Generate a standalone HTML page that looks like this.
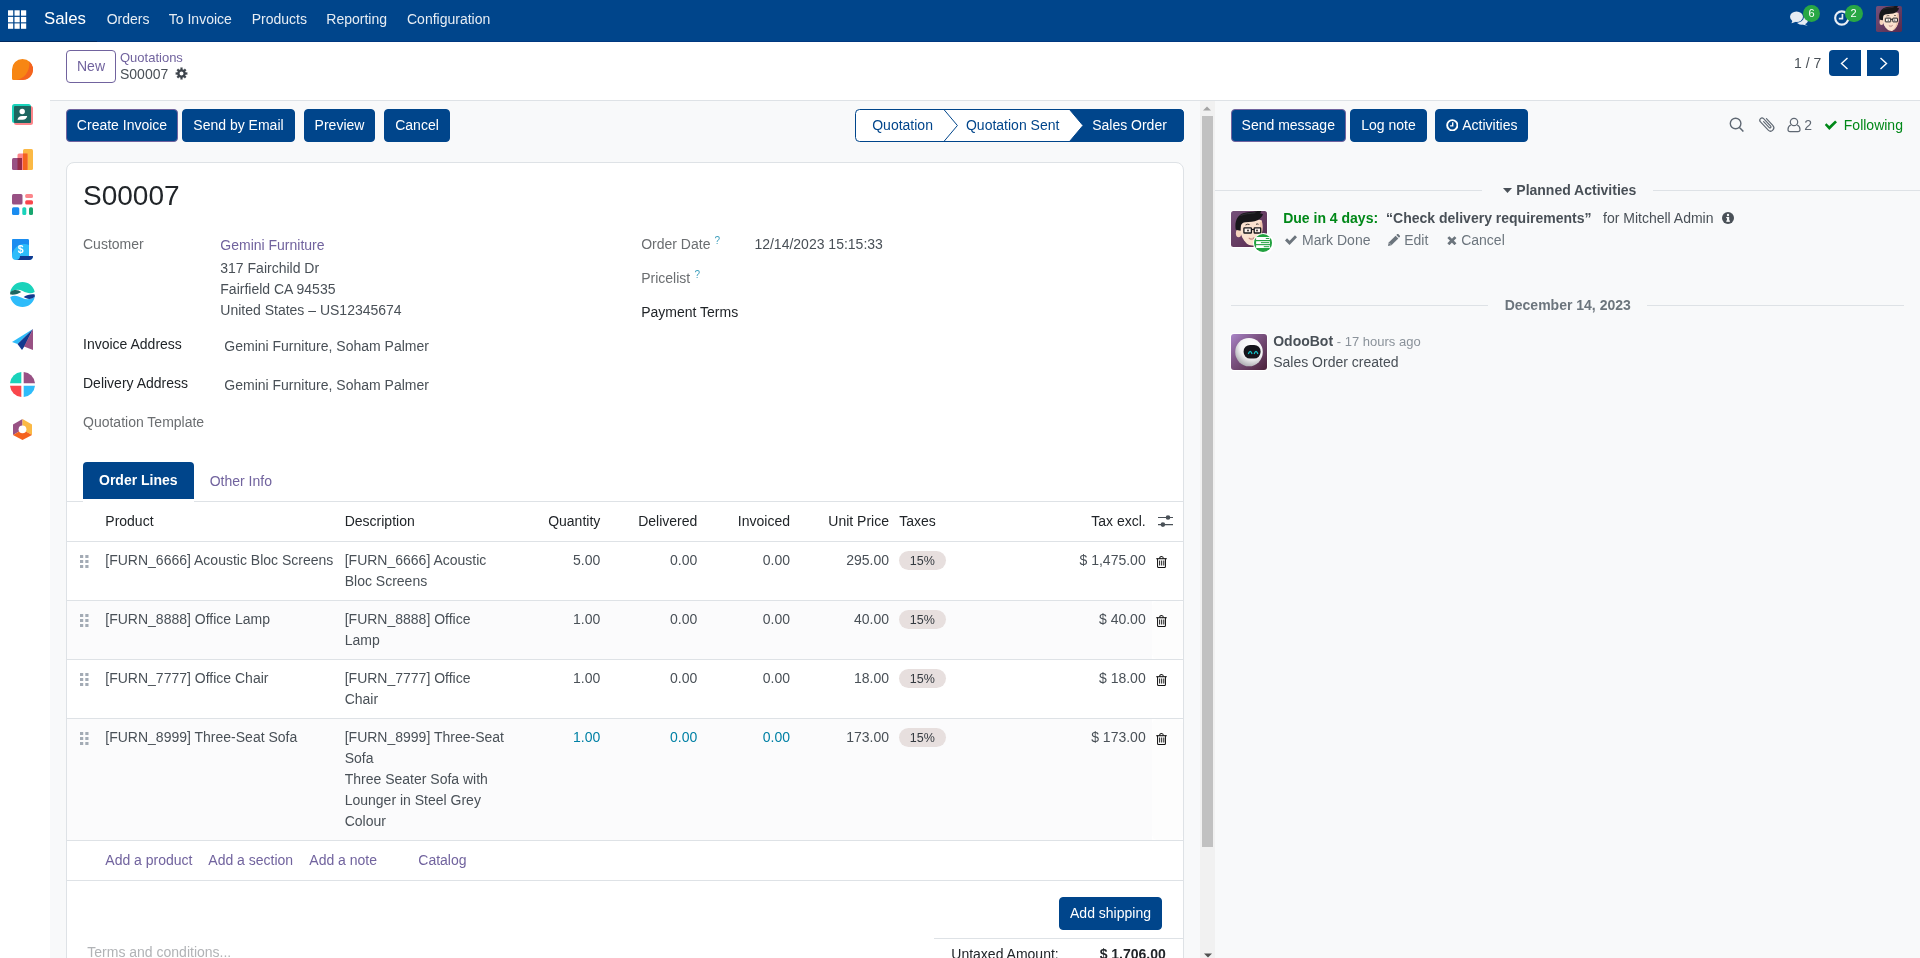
<!DOCTYPE html>
<html lang="en">
<head>
<meta charset="utf-8">
<title>Odoo - S00007</title>
<style>
*{box-sizing:border-box;margin:0;padding:0}
html,body{width:1920px;height:958px;overflow:hidden;background:#f8f9fa}
body{font-family:"Liberation Sans",Arial,sans-serif;font-size:14px;color:#495057;position:relative;line-height:21px}
a{color:#71639e;text-decoration:none}
.abs{position:absolute}
.nw{white-space:nowrap}
svg{display:block}
/* NAVBAR */
#nav{position:absolute;left:0;top:0;width:1920px;height:42px;background:#00458b;color:#fff;border-bottom:1px solid #003880}
#nav .brand{position:absolute;left:44px;top:8px;font-size:16.800px;line-height:22px;color:#fff}
#nav .mi{position:absolute;top:9px;font-size:14px;line-height:21px;color:rgba(255,255,255,.9);white-space:nowrap}
.badge{position:absolute;height:17px;min-width:17px;border-radius:9px;background:#28a745;color:#fff;font-size:11px;line-height:17px;text-align:center}
/* SIDEBAR */
#side{position:absolute;left:0;top:42px;width:50px;height:916px;background:#fff}
/* CONTROL PANEL */
#cp{position:absolute;left:50px;top:42px;width:1870px;height:59px;background:#fff;border-bottom:1px solid #dee2e6}
.btn{position:absolute;height:33px;border-radius:4px;background:#00458b;color:#fff;border:1px solid #00458b;font-size:14px;line-height:31px;text-align:center;white-space:nowrap}
.btn.pri{border-color:#71639e}
/* FORM */
#form{position:absolute;left:50px;top:101px;width:1150px;height:857px;background:#f8f9fa;overflow:hidden}
#sb{position:absolute;left:1200px;top:101px;width:15px;height:857px;background:#f1f1f1}
#sheet{position:absolute;left:16px;top:61px;width:1118px;height:900px;background:#fff;border:1px solid #dee2e6;border-radius:8px 8px 0 0}
/* CHATTER */
#chat{position:absolute;left:1215px;top:101px;width:705px;height:857px;background:#f8f9fa}

#root{position:absolute;left:0;top:0;width:1920px;height:958px;overflow:hidden;will-change:transform}
</style>
</head>
<body>
<div id="root">
<svg width="0" height="0" style="position:absolute"><defs>
<linearGradient id="avg" x1="0" y1="0" x2="1" y2="1"><stop offset="0" stop-color="#75517a"/><stop offset="1" stop-color="#582a4c"/></linearGradient>
<symbol id="avatar" viewBox="0 0 36 36">
<rect width="36" height="36" rx="2.500" fill="url(#avg)"/>
<ellipse cx="7.600" cy="22.300" rx="2.700" ry="4" fill="#f6d3bd"/>
<path d="M9.300 10c6-2.500 15-3 21.500-.500.800 4 .900 9 0 13.500-.900 4.200-3.800 9.500-7.800 11.300-2.500.800-5.500-.200-7.500-2-3.500-3.200-5.800-8-6.200-13z" fill="#fbe2cf"/>
<path d="M28.500 12c1 4 .800 9-.500 13-1.200 3.800-3.500 7.500-6.500 9.300 4.500-.500 8.200-6.500 9.300-11.300.900-4.500.800-9.500 0-13.500z" fill="#f0c4ac"/>
<path d="M4.700 18.500C3.500 11 6 4.500 12 2.300c4-1.500 9-1.300 13-2 2-.400 4-.800 5.500-.600-.300 1.200-.800 2-1.500 2.800 1.200 0 2.300.300 3 1-1.200 2.500-2.800 4.500-5.500 5.800-3.500 1.700-8 1.500-12 2-2.500.300-4 1.200-4.500 3.200-.400 1.700-.300 3.500-.400 5.300-1.700-.200-3.500-.500-4.900-1.300z" fill="#17171a"/>
<path d="M9.500 4.500c4-2 10-2 15-2.800" stroke="#3a3a3f" stroke-width=".800" fill="none"/>
<rect x="12.900" y="16.800" width="7.500" height="5.200" rx=".600" fill="#fff" fill-opacity=".6" stroke="#17171a" stroke-width="1.300"/>
<rect x="23.200" y="16.800" width="6.500" height="5.200" rx=".600" fill="#fff" fill-opacity=".6" stroke="#17171a" stroke-width="1.300"/>
<path d="M20.400 18.500h2.800" stroke="#17171a" stroke-width="1.200"/>
<path d="M14.500 14q2-1.300 4-.500M25 13.300q1.300-.700 2.500 0" stroke="#2a2220" stroke-width=".900" fill="none"/>
<circle cx="17" cy="19.500" r=".900" fill="#2a2220"/><circle cx="26" cy="19.500" r=".900" fill="#2a2220"/>
<path d="M17.800 27c1.800.900 3.500.800 5.200-.400-.800 2.300-3.800 2.800-5.200.400z" fill="#fff" stroke="#9c4a42" stroke-width=".500"/>
</symbol>
<linearGradient id="botg" x1="0" y1="0" x2="1" y2="1"><stop offset="0" stop-color="#aa86c8"/><stop offset=".4" stop-color="#7e5585"/><stop offset="1" stop-color="#4a2139"/></linearGradient>
<radialGradient id="botb" cx=".62" cy=".3" r=".8"><stop offset="0" stop-color="#ffffff"/><stop offset=".55" stop-color="#f2f2f4"/><stop offset="1" stop-color="#9d9da3"/></radialGradient>
<symbol id="bot" viewBox="0 0 36 36">
<rect width="36" height="36" rx="3" fill="url(#botg)"/>
<ellipse cx="18" cy="18.100" rx="13.800" ry="14.200" fill="url(#botb)"/>
<rect x="12.600" y="10.900" width="17" height="13.700" rx="6.500" fill="#15151b"/>
<path d="M17.500 19.500q1.700-4.400 3.400 0" fill="none" stroke="#12c4c9" stroke-width="1.300" stroke-linecap="round"/>
<path d="M23.300 19.500q1.700-4.400 3.400 0" fill="none" stroke="#12c4c9" stroke-width="1.300" stroke-linecap="round"/>
</symbol>
</defs></svg>
<div id="nav">
<div id="navdark" class="abs" style="left:0;top:41px;width:97px;height:1px;background:#00295f"></div>
<svg class="abs" style="left:8px;top:10px" width="19" height="19" viewBox="0 0 19 19"><g fill="#fff"><rect x="0" y="0.3" width="5.2" height="5.4"/><rect x="6.5" y="0.3" width="5.2" height="5.4"/><rect x="13" y="0.3" width="5.2" height="5.4"/><rect x="0" y="6.9" width="5.2" height="5.4"/><rect x="6.5" y="6.9" width="5.2" height="5.4"/><rect x="13" y="6.9" width="5.2" height="5.4"/><rect x="0" y="13.4" width="5.2" height="5.4"/><rect x="6.5" y="13.4" width="5.2" height="5.4"/><rect x="13" y="13.4" width="5.2" height="5.4"/></g></svg>
<div class="brand">Sales</div>
<div class="mi" style="left:106.700px">Orders</div>
<div class="mi" style="left:168.800px">To Invoice</div>
<div class="mi" style="left:251.700px">Products</div>
<div class="mi" style="left:326.300px">Reporting</div>
<div class="mi" style="left:407px">Configuration</div>
<!-- messages icon -->
<svg class="abs" style="left:1790px;top:10.500px" width="18" height="15" viewBox="0 0 18 15"><g fill="#e6ecf4"><ellipse cx="12" cy="9.300" rx="6" ry="4.400"/><path d="M14.200 12.800l3.500 2-4.800-1z"/></g><ellipse cx="6.500" cy="5.700" rx="7.500" ry="6.200" fill="#00458b"/><g fill="#e6ecf4"><ellipse cx="6.500" cy="5.700" rx="6.500" ry="5.200"/><path d="M2.600 9.200L1.500 12.300l4.500-1.600z"/></g></svg>
<div class="badge" style="left:1803px;top:5px">6</div>
<!-- clock icon -->
<svg class="abs" style="left:1834px;top:9.500px" width="15.500" height="16" viewBox="0 0 16 16"><circle cx="8" cy="8" r="6.800" fill="none" stroke="#e9eef5" stroke-width="2.200"/><path d="M8.700 3.800v4.900H5" fill="none" stroke="#e9eef5" stroke-width="1.700"/></svg>
<div class="badge" style="left:1844.500px;top:5px;width:18px">2</div>
<!-- avatar -->
<svg class="abs" style="left:1876px;top:6px" width="26" height="26" viewBox="0 0 36 36"><use href="#avatar"/></svg>
</div>
<div id="side"><div class="abs" style="left:0;top:-1px">
<!-- discuss -->
<svg class="abs" style="left:12px;top:17.500px" width="21" height="21" viewBox="0 0 21 21"><path d="M10.500 0A10.500 10.500 0 0 1 10.500 21H1.500A1.500 1.500 0 0 1 0 19.500V10.500A10.500 10.500 0 0 1 10.500 0z" fill="#f78613"/><path d="M17.200 2.400A10.500 10.500 0 0 1 10.500 21H4.500C13 19.500 18.500 11 17.200 2.400z" fill="#f4631f"/></svg>
<!-- contacts -->
<svg class="abs" style="left:12px;top:63px" width="21" height="21" viewBox="0 0 21 21"><rect x="2" y="2" width="19" height="19" rx="2.500" fill="#fc868b"/><rect x="0" y="0" width="19" height="19" rx="2.500" fill="#1ad3bb"/><rect x="2" y="2" width="17" height="17" rx="1" fill="#1d6660"/><circle cx="10.200" cy="7.500" r="2.700" fill="#fff"/><path d="M5.500 15.800c.300-2.500 2-3.800 4.700-3.800h5c-.400 2.400-2 3.800-4.700 3.800z" fill="#fff"/></svg>
<!-- sales -->
<svg class="abs" style="left:12px;top:108px" width="21" height="21" viewBox="0 0 21 21"><rect x="11" y="0" width="10" height="21" rx="1.500" fill="#fbb945"/><rect x="5.500" y="4.500" width="10" height="16.500" rx="1.500" fill="#fc868b"/><rect x="11" y="4.500" width="4.500" height="16.500" fill="#f4631f"/><rect x="0" y="9" width="10" height="12" rx="1.500" fill="#985184"/><rect x="5.500" y="9" width="4.500" height="12" fill="#962b48"/></svg>
<!-- dashboards -->
<svg class="abs" style="left:12px;top:153px" width="21" height="21" viewBox="0 0 21 21"><rect x="0" y="0" width="10.500" height="10.500" rx="1.500" fill="#985184"/><rect x="13.200" y="0" width="7.800" height="4" rx="1.500" fill="#fc868b"/><rect x="13.200" y="6.200" width="7.800" height="4.300" rx="1.500" fill="#f9464c"/><rect x="0" y="13.300" width="7.300" height="7.700" rx="1.500" fill="#1a8cf0"/><rect x="10.300" y="13.300" width="4" height="7.700" rx="1.500" fill="#1ad3bb"/><rect x="17" y="13.300" width="4" height="7.700" rx="1.500" fill="#17a66f"/></svg>
<!-- invoicing -->
<svg class="abs" style="left:12px;top:198px" width="21" height="21" viewBox="0 0 21 21"><path d="M0 1.500A1.500 1.500 0 0 1 1.500 0H15.500A1.500 1.500 0 0 1 17 1.500V17H21c0 2.500-1.500 4-4 4H4c-2.500 0-4-1.500-4-4z" fill="#2ebcfa"/><path d="M0 1.500A1.500 1.500 0 0 1 1.500 0H15.500A1.500 1.500 0 0 1 17 1.500V6C9 3 1.500 8 0 16z" fill="#1a8cf0"/><path d="M8 17H21c0 2.500-1.500 4-4 4H4c2.500 0 4-1.500 4-4z" fill="#12398f"/><text x="8.600" y="14.200" font-family="Liberation Sans,Arial,sans-serif" font-size="10.500" font-weight="700" fill="#fff" text-anchor="middle">$</text></svg>
<!-- wave circle -->
<svg class="abs" style="left:10px;top:241px" width="25" height="25" viewBox="0 0 25 25"><path d="M.300 10C1.500 4 6.500 0 12.500 0S23.500 4 24.700 10c-4 2.500-8 1-12-1S4.500 7.500.300 10z" fill="#1ad3bb"/><path d="M.300 10c4-3 8-2 11 0-3 2-7 3-11 2.500-.200-.800-.200-1.700 0-2.500z" fill="#1d6660"/><path d="M24.700 15C23.500 21 18.500 25 12.500 25S1.500 21 .300 15c4-2.500 8-1 12 1s8.200 1.500 12.400-1z" fill="#2ebcfa"/><path d="M24.700 15c-4 3-8 2-11 0 3-2 7-3 11-2.500.200.800.200 1.700 0 2.500z" fill="#12398f"/></svg>
<!-- email marketing -->
<svg class="abs" style="left:12px;top:288px" width="21" height="21" viewBox="0 0 21 21"><path d="M21 0L0 13l5.500 2z" fill="#2ebcfa"/><path d="M21 0L5.500 15 10 21l3-4.500z" fill="#12398f"/><path d="M21 0l-9 17.500 9 3.500z" fill="#985184"/></svg>
<!-- quadrants -->
<svg class="abs" style="left:10px;top:331px" width="25" height="25" viewBox="0 0 25 25"><path d="M11.300 0v11.300H0A12.500 12.500 0 0 1 11.300 0z" fill="#1ad3bb"/><path d="M13.700 0A12.500 12.500 0 0 1 25 11.300H13.700z" fill="#985184"/><path d="M0 13.700h11.300V25A12.500 12.500 0 0 1 0 13.700z" fill="#f9464c"/><path d="M13.700 13.700H25A12.500 12.500 0 0 1 13.700 25z" fill="#2ebcfa"/></svg>
<!-- hexagon -->
<svg class="abs" style="left:13px;top:378px" width="19" height="21" viewBox="0 0 19 21"><path d="M9.500 0v10.500L0 16V5.500z" fill="#985184"/><path d="M9.500 0L19 5.500V16l-9.500-5.500z" fill="#fbb945"/><path d="M0 16l9.500-5.500L19 16l-9.500 5z" fill="#f4631f"/><circle cx="9.500" cy="10.300" r="3.900" fill="#fff"/></svg>
</div></div>
<div id="cp"><div class="abs" style="left:0;top:-1px">
<div class="abs nw" style="left:16px;top:9px;width:50px;height:33px;border:1px solid #71639e;border-radius:4px;color:#71639e;text-align:center;line-height:31px;font-size:14px;background:#fff">New</div>
<a class="abs nw" style="left:70px;top:7px;font-size:13px;line-height:19px">Quotations</a>
<div class="abs nw" style="left:70px;top:23px;font-size:14px;line-height:21px;color:#495057">S00007</div>
<svg class="abs" style="left:125.300px;top:26.200px" width="13" height="13" viewBox="0 0 13 13"><path fill-rule="evenodd" fill="#3d444c" d="M5.54 2.21 L5.33 0.62 L7.67 0.62 L7.46 2.21 L8.86 2.78 L9.83 1.51 L11.49 3.17 L10.22 4.14 L10.79 5.54 L12.38 5.33 L12.38 7.67 L10.79 7.46 L10.22 8.86 L11.49 9.83 L9.83 11.49 L8.86 10.22 L7.46 10.79 L7.67 12.38 L5.33 12.38 L5.54 10.79 L4.14 10.22 L3.17 11.49 L1.51 9.83 L2.78 8.86 L2.21 7.46 L0.62 7.67 L0.62 5.33 L2.21 5.54 L2.78 4.14 L1.51 3.17 L3.17 1.51 L4.14 2.78z M8.50 6.50A2.0 2.0 0 1 0 4.50 6.50A2.0 2.0 0 1 0 8.50 6.50z"/></svg>
<div class="abs nw" style="left:1744px;top:12px;font-size:14px;line-height:21px;color:#495057">1 / 7</div>
<div class="abs" style="left:1779px;top:9px;width:32px;height:26px;border-radius:4px 0 0 4px;background:#00458b"><svg class="abs" style="left:11px;top:7px" width="9" height="13" viewBox="0 0 9 13"><path d="M7.500 1L1.500 6.500l6 5.500" fill="none" stroke="#fff" stroke-width="1.400"/></svg></div>
<div class="abs" style="left:1817px;top:9px;width:32px;height:26px;border-radius:0 4px 4px 0;background:#00458b"><svg class="abs" style="left:12px;top:7px" width="9" height="13" viewBox="0 0 9 13"><path d="M1.500 1l6 5.500-6 5.500" fill="none" stroke="#fff" stroke-width="1.400"/></svg></div>
</div></div>
<div id="form">
<div class="abs" style="left:-50px;top:-101px;width:0;height:0">
<div class="btn pri" style="left:66px;top:109px;width:112px;height:33px;line-height:31px">Create Invoice</div>
<div class="btn" style="left:182px;top:109px;width:113px;height:33px;line-height:31px">Send by Email</div>
<div class="btn" style="left:304px;top:109px;width:71px;height:33px;line-height:31px">Preview</div>
<div class="btn" style="left:384px;top:109px;width:66px;height:33px;line-height:31px">Cancel</div>
<svg class="abs" style="left:855px;top:109px" width="329" height="33" viewBox="0 0 329 33"><path d="M4.500 .500H324.500a4 4 0 0 1 4 4V28.500a4 4 0 0 1-4 4H4.500A4 4 0 0 1 .500 28.500V4.500A4 4 0 0 1 4.500 .500z" fill="#fff" stroke="#00458b"/><path d="M214.500 .500H324.500a4 4 0 0 1 4 4V28.500a4 4 0 0 1-4 4H214.500L228 16.500z" fill="#00458b" stroke="#00458b"/><path d="M88.900 .500L102.400 16.500 88.900 32.500" fill="none" stroke="#00458b"/><text x="47.600" y="21" text-anchor="middle" font-family="Liberation Sans,Arial,sans-serif" font-size="14" fill="#00458b">Quotation</text><text x="157.700" y="21" text-anchor="middle" font-family="Liberation Sans,Arial,sans-serif" font-size="14" fill="#00458b">Quotation Sent</text><text x="274.500" y="21" text-anchor="middle" font-family="Liberation Sans,Arial,sans-serif" font-size="14" fill="#fff">Sales Order</text></svg>
<div class="abs" style="left:66px;top:162px;width:1118px;height:810px;background:#fff;border:1px solid #dee2e6;border-radius:8px 8px 0 0"></div>
<div class="abs nw" style="top:179.5px;font-size:28px;line-height:31px;color:#212529;left:83px;">S00007</div>
<div class="abs nw" style="top:236px;font-size:14px;line-height:16px;color:#6b6e71;left:83px;">Customer</div>
<a class="abs nw" style="top:237px;font-size:14px;line-height:16px;color:#71639e;left:220.3px;">Gemini Furniture</a>
<div class="abs nw" style="top:260.3px;font-size:14px;line-height:16px;color:#495057;left:220.3px;">317 Fairchild Dr</div>
<div class="abs nw" style="top:281.3px;font-size:14px;line-height:16px;color:#495057;left:220.3px;">Fairfield CA 94535</div>
<div class="abs nw" style="top:301.5px;font-size:14px;line-height:16px;color:#495057;left:220.3px;">United States – US12345674</div>
<div class="abs nw" style="top:336px;font-size:14px;line-height:16px;color:#212529;left:83px;">Invoice Address</div>
<div class="abs nw" style="top:338px;font-size:14px;line-height:16px;color:#495057;left:224.3px;">Gemini Furniture, Soham Palmer</div>
<div class="abs nw" style="top:375px;font-size:14px;line-height:16px;color:#212529;left:83px;">Delivery Address</div>
<div class="abs nw" style="top:377px;font-size:14px;line-height:16px;color:#495057;left:224.3px;">Gemini Furniture, Soham Palmer</div>
<div class="abs nw" style="top:414.3px;font-size:14px;line-height:16px;color:#6b6e71;left:83px;">Quotation Template</div>
<div class="abs nw" style="top:235.5px;font-size:14px;line-height:16px;color:#6b6e71;left:641.2px;">Order Date</div>
<div class="abs nw" style="top:235px;font-size:10px;line-height:11px;color:#3e9fbd;left:714.4px;">?</div>
<div class="abs nw" style="top:235.5px;font-size:14px;line-height:16px;color:#495057;left:754.4px;">12/14/2023 15:15:33</div>
<div class="abs nw" style="top:270.3px;font-size:14px;line-height:16px;color:#6b6e71;left:641.2px;">Pricelist</div>
<div class="abs nw" style="top:269px;font-size:10px;line-height:11px;color:#3e9fbd;left:694.4px;">?</div>
<div class="abs nw" style="top:303.5px;font-size:14px;line-height:16px;color:#212529;left:641.2px;">Payment Terms</div>
<div class="abs" style="left:83px;top:462px;width:111px;height:37px;background:#00458b;border-radius:4px 4px 0 0"></div>
<div class="abs nw" style="top:471.5px;font-size:14px;line-height:16px;color:#fff;font-weight:700;left:99px;">Order Lines</div>
<a class="abs nw" style="top:472.7px;font-size:14px;line-height:16px;color:#71639e;left:209.7px;">Other Info</a>
<div class="abs" style="left:67px;top:501px;width:16px;height:1px;background:#dee2e6;"></div>
<div class="abs" style="left:194px;top:501px;width:989px;height:1px;background:#dee2e6;"></div>
<div class="abs nw" style="top:513px;font-size:14px;line-height:16px;color:#212529;left:105.3px;">Product</div>
<div class="abs nw" style="top:513px;font-size:14px;line-height:16px;color:#212529;left:344.7px;">Description</div>
<div class="abs" style="left:600.3px;top:513px;width:0;height:0"><div class="abs nw" style="top:0;font-size:14px;line-height:16px;color:#212529;right:0;">Quantity</div></div>
<div class="abs" style="left:697.3px;top:513px;width:0;height:0"><div class="abs nw" style="top:0;font-size:14px;line-height:16px;color:#212529;right:0;">Delivered</div></div>
<div class="abs" style="left:790px;top:513px;width:0;height:0"><div class="abs nw" style="top:0;font-size:14px;line-height:16px;color:#212529;right:0;">Invoiced</div></div>
<div class="abs" style="left:889px;top:513px;width:0;height:0"><div class="abs nw" style="top:0;font-size:14px;line-height:16px;color:#212529;right:0;">Unit Price</div></div>
<div class="abs nw" style="top:513px;font-size:14px;line-height:16px;color:#212529;left:899.3px;">Taxes</div>
<div class="abs" style="left:1145.7px;top:513px;width:0;height:0"><div class="abs nw" style="top:0;font-size:14px;line-height:16px;color:#212529;right:0;">Tax excl.</div></div>
<svg class="abs" style="left:1158px;top:514px" width="15" height="14" viewBox="0 0 15 14"><g stroke="#495057" stroke-width="1.100" fill="none"><path d="M0 3.500h15M0 10.600h15"/></g><circle cx="10" cy="3.500" r="2.300" fill="#495057"/><circle cx="4.900" cy="10.600" r="2.300" fill="#495057"/></svg>
<div class="abs" style="left:67px;top:541px;width:1116px;height:1px;background:#dee2e6;"></div>
<svg class="abs" style="left:79.7px;top:555px" width="9" height="13" viewBox="0 0 9 13"><g fill="#a3abb5"><rect x="0" y="0" width="3.200" height="3"/><rect x="5.300" y="0" width="3.200" height="3"/><rect x="0" y="5" width="3.200" height="3"/><rect x="5.300" y="5" width="3.200" height="3"/><rect x="0" y="10" width="3.200" height="3"/><rect x="5.300" y="10" width="3.200" height="3"/></g></svg>
<div class="abs nw" style="top:552px;font-size:14px;line-height:16px;color:#495057;left:105.3px;">[FURN_6666] Acoustic Bloc Screens</div>
<div class="abs nw" style="top:552px;font-size:14px;line-height:16px;color:#495057;left:344.7px;">[FURN_6666] Acoustic</div>
<div class="abs nw" style="top:573px;font-size:14px;line-height:16px;color:#495057;left:344.7px;">Bloc Screens</div>
<div class="abs" style="left:600.3px;top:552px;width:0;height:0"><div class="abs nw" style="top:0;font-size:14px;line-height:16px;color:#495057;right:0;">5.00</div></div>
<div class="abs" style="left:697.3px;top:552px;width:0;height:0"><div class="abs nw" style="top:0;font-size:14px;line-height:16px;color:#495057;right:0;">0.00</div></div>
<div class="abs" style="left:790px;top:552px;width:0;height:0"><div class="abs nw" style="top:0;font-size:14px;line-height:16px;color:#495057;right:0;">0.00</div></div>
<div class="abs" style="left:889px;top:552px;width:0;height:0"><div class="abs nw" style="top:0;font-size:14px;line-height:16px;color:#495057;right:0;">295.00</div></div>
<div class="abs" style="left:899px;top:551px;width:47px;height:19px;background:#e7dfde;border-radius:9.500px"></div>
<div class="abs nw" style="top:554px;font-size:12.5px;line-height:14px;color:#343a40;left:909.8px;">15%</div>
<div class="abs" style="left:1145.7px;top:552px;width:0;height:0"><div class="abs nw" style="top:0;font-size:14px;line-height:16px;color:#495057;right:0;">$ 1,475.00</div></div>
<svg class="abs" style="left:1155.700px;top:556px" width="11" height="12" viewBox="0 0 12 12" preserveAspectRatio="none"><g fill="none" stroke="#111" stroke-width="1.100"><path d="M.300 2.700h11.400"/><path d="M4 2.500c0-2.600 4-2.600 4 0"/><path d="M1.700 2.700v7.800a1 1 0 0 0 1 1h6.600a1 1 0 0 0 1-1V2.700"/><path d="M3.950 4.500v5M6.200 4.500v5M8.500 4.500v5" stroke-width="1"/></g></svg>
<div class="abs" style="left:67px;top:600px;width:1116px;height:1px;background:#dee2e6;"></div>
<div class="abs" style="left:67px;top:601px;width:1085px;height:58px;background:#fbfbfc;"></div>
<div class="abs" style="left:1152px;top:601px;width:31px;height:58px;background:#fdfdfd;border-radius:6px"></div>
<svg class="abs" style="left:79.7px;top:614px" width="9" height="13" viewBox="0 0 9 13"><g fill="#a3abb5"><rect x="0" y="0" width="3.200" height="3"/><rect x="5.300" y="0" width="3.200" height="3"/><rect x="0" y="5" width="3.200" height="3"/><rect x="5.300" y="5" width="3.200" height="3"/><rect x="0" y="10" width="3.200" height="3"/><rect x="5.300" y="10" width="3.200" height="3"/></g></svg>
<div class="abs nw" style="top:611px;font-size:14px;line-height:16px;color:#495057;left:105.3px;">[FURN_8888] Office Lamp</div>
<div class="abs nw" style="top:611px;font-size:14px;line-height:16px;color:#495057;left:344.7px;">[FURN_8888] Office</div>
<div class="abs nw" style="top:632px;font-size:14px;line-height:16px;color:#495057;left:344.7px;">Lamp</div>
<div class="abs" style="left:600.3px;top:611px;width:0;height:0"><div class="abs nw" style="top:0;font-size:14px;line-height:16px;color:#495057;right:0;">1.00</div></div>
<div class="abs" style="left:697.3px;top:611px;width:0;height:0"><div class="abs nw" style="top:0;font-size:14px;line-height:16px;color:#495057;right:0;">0.00</div></div>
<div class="abs" style="left:790px;top:611px;width:0;height:0"><div class="abs nw" style="top:0;font-size:14px;line-height:16px;color:#495057;right:0;">0.00</div></div>
<div class="abs" style="left:889px;top:611px;width:0;height:0"><div class="abs nw" style="top:0;font-size:14px;line-height:16px;color:#495057;right:0;">40.00</div></div>
<div class="abs" style="left:899px;top:610px;width:47px;height:19px;background:#e7dfde;border-radius:9.500px"></div>
<div class="abs nw" style="top:613px;font-size:12.5px;line-height:14px;color:#343a40;left:909.8px;">15%</div>
<div class="abs" style="left:1145.7px;top:611px;width:0;height:0"><div class="abs nw" style="top:0;font-size:14px;line-height:16px;color:#495057;right:0;">$ 40.00</div></div>
<svg class="abs" style="left:1155.700px;top:615px" width="11" height="12" viewBox="0 0 12 12" preserveAspectRatio="none"><g fill="none" stroke="#111" stroke-width="1.100"><path d="M.300 2.700h11.400"/><path d="M4 2.500c0-2.600 4-2.600 4 0"/><path d="M1.700 2.700v7.800a1 1 0 0 0 1 1h6.600a1 1 0 0 0 1-1V2.700"/><path d="M3.950 4.500v5M6.200 4.500v5M8.500 4.500v5" stroke-width="1"/></g></svg>
<div class="abs" style="left:67px;top:659px;width:1116px;height:1px;background:#dee2e6;"></div>
<svg class="abs" style="left:79.7px;top:673px" width="9" height="13" viewBox="0 0 9 13"><g fill="#a3abb5"><rect x="0" y="0" width="3.200" height="3"/><rect x="5.300" y="0" width="3.200" height="3"/><rect x="0" y="5" width="3.200" height="3"/><rect x="5.300" y="5" width="3.200" height="3"/><rect x="0" y="10" width="3.200" height="3"/><rect x="5.300" y="10" width="3.200" height="3"/></g></svg>
<div class="abs nw" style="top:670px;font-size:14px;line-height:16px;color:#495057;left:105.3px;">[FURN_7777] Office Chair</div>
<div class="abs nw" style="top:670px;font-size:14px;line-height:16px;color:#495057;left:344.7px;">[FURN_7777] Office</div>
<div class="abs nw" style="top:691px;font-size:14px;line-height:16px;color:#495057;left:344.7px;">Chair</div>
<div class="abs" style="left:600.3px;top:670px;width:0;height:0"><div class="abs nw" style="top:0;font-size:14px;line-height:16px;color:#495057;right:0;">1.00</div></div>
<div class="abs" style="left:697.3px;top:670px;width:0;height:0"><div class="abs nw" style="top:0;font-size:14px;line-height:16px;color:#495057;right:0;">0.00</div></div>
<div class="abs" style="left:790px;top:670px;width:0;height:0"><div class="abs nw" style="top:0;font-size:14px;line-height:16px;color:#495057;right:0;">0.00</div></div>
<div class="abs" style="left:889px;top:670px;width:0;height:0"><div class="abs nw" style="top:0;font-size:14px;line-height:16px;color:#495057;right:0;">18.00</div></div>
<div class="abs" style="left:899px;top:669px;width:47px;height:19px;background:#e7dfde;border-radius:9.500px"></div>
<div class="abs nw" style="top:672px;font-size:12.5px;line-height:14px;color:#343a40;left:909.8px;">15%</div>
<div class="abs" style="left:1145.7px;top:670px;width:0;height:0"><div class="abs nw" style="top:0;font-size:14px;line-height:16px;color:#495057;right:0;">$ 18.00</div></div>
<svg class="abs" style="left:1155.700px;top:674px" width="11" height="12" viewBox="0 0 12 12" preserveAspectRatio="none"><g fill="none" stroke="#111" stroke-width="1.100"><path d="M.300 2.700h11.400"/><path d="M4 2.500c0-2.600 4-2.600 4 0"/><path d="M1.700 2.700v7.800a1 1 0 0 0 1 1h6.600a1 1 0 0 0 1-1V2.700"/><path d="M3.950 4.500v5M6.200 4.500v5M8.500 4.500v5" stroke-width="1"/></g></svg>
<div class="abs" style="left:67px;top:718px;width:1116px;height:1px;background:#dee2e6;"></div>
<div class="abs" style="left:67px;top:719px;width:1085px;height:121px;background:#fbfbfc;"></div>
<div class="abs" style="left:1152px;top:719px;width:31px;height:121px;background:#fdfdfd;border-radius:6px"></div>
<svg class="abs" style="left:79.7px;top:732px" width="9" height="13" viewBox="0 0 9 13"><g fill="#a3abb5"><rect x="0" y="0" width="3.200" height="3"/><rect x="5.300" y="0" width="3.200" height="3"/><rect x="0" y="5" width="3.200" height="3"/><rect x="5.300" y="5" width="3.200" height="3"/><rect x="0" y="10" width="3.200" height="3"/><rect x="5.300" y="10" width="3.200" height="3"/></g></svg>
<div class="abs nw" style="top:729px;font-size:14px;line-height:16px;color:#495057;left:105.3px;">[FURN_8999] Three-Seat Sofa</div>
<div class="abs nw" style="top:729px;font-size:14px;line-height:16px;color:#495057;left:344.7px;">[FURN_8999] Three-Seat</div>
<div class="abs nw" style="top:750px;font-size:14px;line-height:16px;color:#495057;left:344.7px;">Sofa</div>
<div class="abs nw" style="top:771px;font-size:14px;line-height:16px;color:#495057;left:344.7px;">Three Seater Sofa with</div>
<div class="abs nw" style="top:792px;font-size:14px;line-height:16px;color:#495057;left:344.7px;">Lounger in Steel Grey</div>
<div class="abs nw" style="top:813px;font-size:14px;line-height:16px;color:#495057;left:344.7px;">Colour</div>
<div class="abs" style="left:600.3px;top:729px;width:0;height:0"><div class="abs nw" style="top:0;font-size:14px;line-height:16px;color:#0180a5;right:0;">1.00</div></div>
<div class="abs" style="left:697.3px;top:729px;width:0;height:0"><div class="abs nw" style="top:0;font-size:14px;line-height:16px;color:#0180a5;right:0;">0.00</div></div>
<div class="abs" style="left:790px;top:729px;width:0;height:0"><div class="abs nw" style="top:0;font-size:14px;line-height:16px;color:#0180a5;right:0;">0.00</div></div>
<div class="abs" style="left:889px;top:729px;width:0;height:0"><div class="abs nw" style="top:0;font-size:14px;line-height:16px;color:#495057;right:0;">173.00</div></div>
<div class="abs" style="left:899px;top:728px;width:47px;height:19px;background:#e7dfde;border-radius:9.500px"></div>
<div class="abs nw" style="top:731px;font-size:12.5px;line-height:14px;color:#343a40;left:909.8px;">15%</div>
<div class="abs" style="left:1145.7px;top:729px;width:0;height:0"><div class="abs nw" style="top:0;font-size:14px;line-height:16px;color:#495057;right:0;">$ 173.00</div></div>
<svg class="abs" style="left:1155.700px;top:733px" width="11" height="12" viewBox="0 0 12 12" preserveAspectRatio="none"><g fill="none" stroke="#111" stroke-width="1.100"><path d="M.300 2.700h11.400"/><path d="M4 2.500c0-2.600 4-2.600 4 0"/><path d="M1.700 2.700v7.800a1 1 0 0 0 1 1h6.600a1 1 0 0 0 1-1V2.700"/><path d="M3.950 4.500v5M6.200 4.500v5M8.500 4.500v5" stroke-width="1"/></g></svg>
<div class="abs" style="left:67px;top:840px;width:1116px;height:1px;background:#dee2e6;"></div>
<a class="abs nw" style="top:852px;font-size:14px;line-height:16px;color:#71639e;left:105.3px;">Add a product</a>
<a class="abs nw" style="top:852px;font-size:14px;line-height:16px;color:#71639e;left:208.3px;">Add a section</a>
<a class="abs nw" style="top:852px;font-size:14px;line-height:16px;color:#71639e;left:309.3px;">Add a note</a>
<a class="abs nw" style="top:852px;font-size:14px;line-height:16px;color:#71639e;left:418.3px;">Catalog</a>
<div class="abs" style="left:67px;top:880px;width:1116px;height:1px;background:#dee2e6;"></div>
<div class="btn" style="left:1059px;top:897px;width:103px;height:33px;line-height:31px">Add shipping</div>
<div class="abs" style="left:934px;top:938px;width:249px;height:1px;background:#dee2e6;"></div>
<div class="abs nw" style="top:946.2px;font-size:14px;line-height:16px;color:#212529;left:951.3px;">Untaxed Amount:</div>
<div class="abs" style="left:1165.8px;top:946.2px;width:0;height:0"><div class="abs nw" style="top:0;font-size:14px;line-height:16px;color:#212529;font-weight:700;right:0;">$ 1,706.00</div></div>
<div class="abs nw" style="top:944px;font-size:14px;line-height:16px;color:#b1b3b6;left:87.3px;">Terms and conditions...</div>
</div></div>
<div id="sb">
<div class="abs" style="left:2px;top:15px;width:11px;height:731px;background:#c1c1c1;"></div>
<svg class="abs" style="left:3px;top:5px" width="8" height="5" viewBox="0 0 8 5"><path d="M0 4.500L4 .500l4 4z" fill="#a3a3a3"/></svg>
<svg class="abs" style="left:3.500px;top:852px" width="8" height="5" viewBox="0 0 8 5"><path d="M0 .500h8L4 4.500z" fill="#505050"/></svg>
</div>
<div id="chat"><div class="abs" style="left:-1215px;top:-101px;width:0;height:0">
<div class="btn pri" style="left:1231px;top:109px;width:114.5px;height:33px;line-height:31px">Send message</div>
<div class="btn" style="left:1350px;top:109px;width:77px;height:33px;line-height:31px">Log note</div>
<div class="btn" style="left:1435px;top:109px;width:93px;height:33px;line-height:31px"></div>
<svg class="abs" style="left:1445.600px;top:118.800px" width="12.600" height="12.600" viewBox="0 0 12 12"><circle cx="6" cy="6" r="4.900" fill="none" stroke="#fff" stroke-width="1.800"/><path d="M6.400 3.200v3.400H3.900" fill="none" stroke="#fff" stroke-width="1.300"/></svg>
<div class="abs nw" style="top:117px;font-size:14px;line-height:16px;color:#fff;left:1462.2px;">Activities</div>
<svg class="abs" style="left:1729px;top:117px" width="16" height="16" viewBox="0 0 16 16"><circle cx="6.600" cy="6.500" r="5.300" fill="none" stroke="#5f6873" stroke-width="1.400"/><path d="M10.400 10.400l4 4.200" stroke="#5f6873" stroke-width="1.500" fill="none"/></svg>
<svg class="abs" style="left:1757.800px;top:114.300px" width="18" height="20" viewBox="0 0 18 19" preserveAspectRatio="none"><g transform="rotate(-45 9 9.500)"><path d="M12.200 5.500v9a3.200 3.200 0 0 1-6.400 0V3.500a2.200 2.200 0 0 1 4.400 0v10a1 1 0 0 1-2 0V5.500" fill="none" stroke="#5f6873" stroke-width="1.200" stroke-linecap="round"/></g></svg>
<svg class="abs" style="left:1787px;top:117px" width="14" height="16" viewBox="0 0 14 16"><circle cx="7" cy="5" r="3.700" fill="none" stroke="#5f6873" stroke-width="1.200"/><path d="M3.800 8C1.800 8.800 1 10.500 1 12.500c0 1.400.800 2.200 2 2.200h8c1.200 0 2-.800 2-2.200 0-2-.800-3.700-2.800-4.500" fill="none" stroke="#5f6873" stroke-width="1.200"/></svg>
<div class="abs nw" style="top:116.8px;font-size:14px;line-height:16px;color:#5f6873;left:1804.3px;">2</div>
<svg class="abs" style="left:1824px;top:120px" width="14" height="11" viewBox="0 0 14 11"><path d="M.800 5L2.400 3.300 5.300 6.100 11.100 .500 13 2.300 5.300 9.900z" fill="#008818"/></svg>
<div class="abs nw" style="top:116.8px;font-size:14px;line-height:16px;color:#008818;left:1843.8px;">Following</div>
<div class="abs" style="left:1215px;top:190px;width:267px;height:1px;background:#dee2e6;"></div>
<div class="abs" style="left:1653px;top:190px;width:267px;height:1px;background:#dee2e6;"></div>
<svg class="abs" style="left:1503.200px;top:187.500px" width="9" height="5" viewBox="0 0 9 5"><path d="M0 0h9L4.500 5z" fill="#495057"/></svg>
<div class="abs nw" style="top:182px;font-size:14px;line-height:16px;color:#495057;font-weight:700;left:1516.3px;">Planned Activities</div>
<div class="abs" style="left:1230px;top:210px;width:38px;height:38px;background:#fff;border-radius:4px"></div>
<svg class="abs" style="left:1231px;top:211px" width="36" height="36" viewBox="0 0 36 36"><use href="#avatar"/></svg>
<div class="abs" style="left:1252.500px;top:232.500px;width:21px;height:21px;border-radius:10.500px;background:#fff"></div>
<div class="abs" style="left:1253.900px;top:233.900px;width:18.200px;height:18.200px;border-radius:9.100px;background:#22a13f"></div>
<svg class="abs" style="left:1256px;top:236.900px" width="14" height="11.200" viewBox="0 0 14 11.200"><g fill="#fff"><rect x=".100" y="0" width="13.800" height="3"/><rect x=".100" y="4.200" width="13.800" height="2.900"/><rect x=".100" y="8.200" width="13.800" height="3"/></g><path d="M10.200 1.500h2.600M5.300 5.650h7.500M8.200 9.700h4.600" stroke="#22a13f" stroke-width="1" stroke-linecap="round"/></svg>
<div class="abs nw" style="top:210px;font-size:14px;line-height:16px;color:#008818;font-weight:700;left:1283.2px;">Due in 4 days:</div>
<div class="abs nw" style="top:210px;font-size:14px;line-height:16px;color:#495057;font-weight:700;left:1386.1px;">“Check delivery requirements”</div>
<div class="abs nw" style="top:210px;font-size:14px;line-height:16px;color:#495057;left:1603px;">for Mitchell Admin</div>
<svg class="abs" style="left:1722px;top:212px" width="12" height="12" viewBox="0 0 12 12"><circle cx="6" cy="6" r="6" fill="#495057"/><rect x="5" y="5" width="2.200" height="4.500" fill="#f8f9fa"/><rect x="4.200" y="5" width="2" height="1.200" fill="#f8f9fa"/><rect x="4.200" y="8.500" width="3.800" height="1.200" fill="#f8f9fa"/><circle cx="6" cy="3" r="1.200" fill="#f8f9fa"/></svg>
<svg class="abs" style="left:1285px;top:235.400px" width="12" height="9.600" viewBox="0 0 12 9.600"><path d="M1 4.400l3.500 3.500 6.500-6.700" stroke="#6c757d" stroke-width="2.900" fill="none"/></svg>
<div class="abs nw" style="top:231.8px;font-size:14px;line-height:16px;color:#6c757d;left:1302px;">Mark Done</div>
<svg class="abs" style="left:1388px;top:234.200px" width="12" height="12" viewBox="0 0 12 12"><path d="M0 12l.700-3.400L7.600 1.700l2.700 2.700L3.400 11.300z" fill="#6c757d"/><path d="M8.300 1l.900-.900c.300-.300.800-.300 1.100 0l1.600 1.600c.300.300.300.800 0 1.100l-.900.900z" fill="#6c757d"/><path d="M1.600 9.300l1.300 1.300" stroke="#f8f9fa" stroke-width=".600"/></svg>
<div class="abs nw" style="top:231.8px;font-size:14px;line-height:16px;color:#6c757d;left:1404.2px;">Edit</div>
<svg class="abs" style="left:1447.200px;top:235.600px" width="9.800" height="9.400" viewBox="0 0 10 10"><path d="M1.200 1.200l7.600 7.600M8.800 1.200L1.200 8.800" stroke="#6c757d" stroke-width="3" fill="none"/></svg>
<div class="abs nw" style="top:231.8px;font-size:14px;line-height:16px;color:#6c757d;left:1461.2px;">Cancel</div>
<div class="abs" style="left:1231px;top:305px;width:257px;height:1px;background:#dee2e6;"></div>
<div class="abs" style="left:1647px;top:305px;width:257px;height:1px;background:#dee2e6;"></div>
<div class="abs nw" style="top:297px;font-size:14px;line-height:16px;color:#6c757d;font-weight:700;left:1504.7px;">December 14, 2023</div>
<div class="abs" style="left:1230px;top:333px;width:38px;height:38px;background:#fff;border-radius:4px"></div>
<svg class="abs" style="left:1231px;top:334px" width="36" height="36" viewBox="0 0 36 36"><use href="#bot"/></svg>
<div class="abs nw" style="top:332.6px;font-size:14px;line-height:16px;color:#495057;font-weight:700;left:1273.2px;">OdooBot</div>
<div class="abs nw" style="top:333.6px;font-size:13px;line-height:15px;color:#8a929a;left:1336.8px;">- 17 hours ago</div>
<div class="abs nw" style="top:354.4px;font-size:14px;line-height:16px;color:#495057;left:1273.2px;">Sales Order created</div>
</div></div>
</div>
</body>
</html>
